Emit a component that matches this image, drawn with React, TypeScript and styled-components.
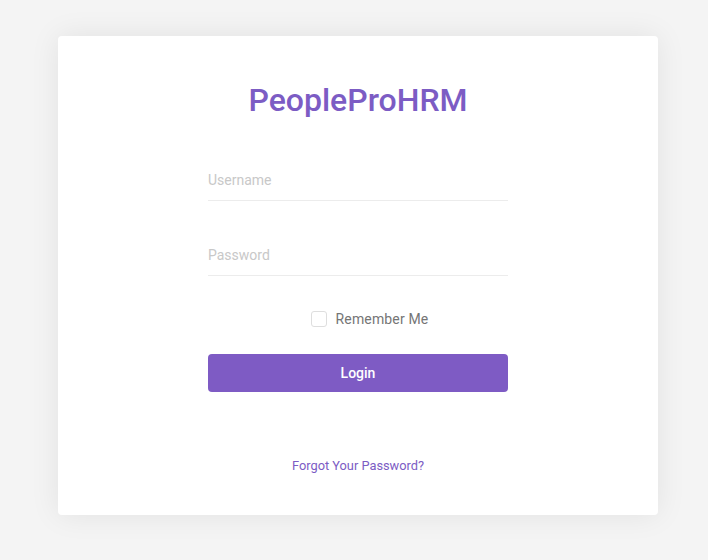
import React from "react";
import styled, { createGlobalStyle } from "styled-components";

const Global = createGlobalStyle`
  html, body { margin: 0; padding: 0; background: #f4f4f4; }
  body { font-family: Roboto, "Noto Sans", sans-serif; }
  * { box-sizing: border-box; }
`;

const Page = styled.div`
  width: 708px;
  height: 560px;
  padding-top: 36px;
  padding-left: 58px;
  background: #f4f4f4;
`;

const Card = styled.div`
  width: 600px;
  height: 479px;
  background: #fff;
  border-radius: 4px;
  box-shadow: 0 0 30px rgba(0, 0, 0, 0.08);
  padding-top: 44px;
  display: flex;
  flex-direction: column;
  align-items: center;
`;

const Title = styled.h1`
  margin: 0;
  height: 40px;
  line-height: 40px;
  font-size: 32px;
  font-weight: 500;
  color: #7c5cc4;
`;

const Form = styled.form`
  width: 300px;
  display: flex;
  flex-direction: column;
`;

const Input = styled.input<{ $gap: number }>`
  margin-top: ${(p) => p.$gap}px;
  height: 41px;
  border: none;
  border-bottom: 1px solid #ececec;
  padding: 0;
  font-family: Roboto, sans-serif;
  font-size: 14px;
  color: #555;
  outline: none;
  &::placeholder { color: #c8c8c8; }
`;

const CheckRow = styled.label`
  margin-top: 33px;
  height: 20px;
  display: flex;
  align-items: center;
  justify-content: center;
  gap: 9px;
  padding-left: 23px;
  font-size: 14px;
  letter-spacing: 0.15px;
  color: #757575;
`;

const Box = styled.span`
  width: 16px;
  height: 16px;
  border: 1px solid #dedede;
  border-radius: 3px;
  background: #fff;
`;

const Button = styled.button`
  margin-top: 25px;
  height: 38px;
  border: none;
  border-radius: 4px;
  background: #7e5bc4;
  color: #fff;
  font-family: Roboto, sans-serif;
  font-size: 14px;
  font-weight: 500;
`;

const Forgot = styled.a`
  margin-top: 66px;
  line-height: 16px;
  font-size: 12.8px;
  color: #7c5cc4;
  text-decoration: none;
`;

export default function App() {
  return (
    <Page>
      <Global />
      <Card>
        <Title>PeopleProHRM</Title>
        <Form onSubmit={(e) => e.preventDefault()}>
          <Input $gap={40} placeholder="Username" />
          <Input $gap={34} type="password" placeholder="Password" />
          <CheckRow>
            <Box />
            Remember Me
          </CheckRow>
          <Button type="submit">Login</Button>
        </Form>
        <Forgot href="#">Forgot Your Password?</Forgot>
      </Card>
    </Page>
  );
}
